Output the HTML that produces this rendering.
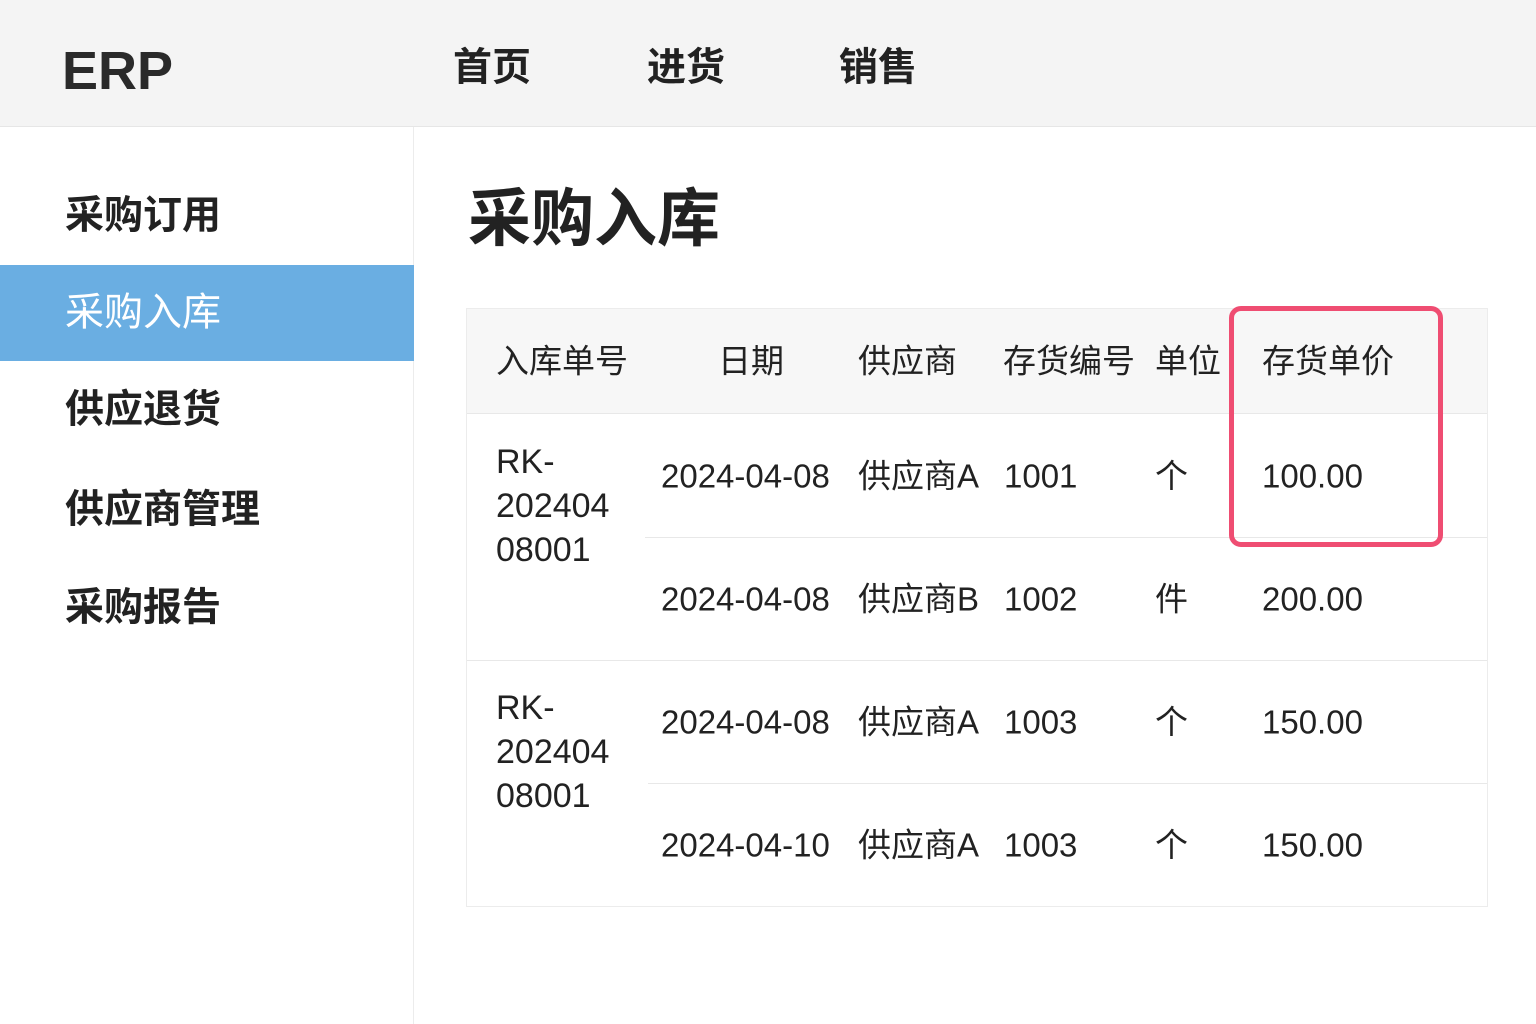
<!DOCTYPE html>
<html><head><meta charset="utf-8"><style>
body{margin:0;width:1536px;height:1024px;position:relative;overflow:hidden;background:#fff;font-family:"Liberation Sans","Noto Sans CJK SC",sans-serif;color:#222}
.a{position:absolute;white-space:nowrap;line-height:1}
.hdr{position:absolute;left:0;top:0;width:1536px;height:126px;background:#f4f4f4;border-bottom:1px solid #e6e6e6}
.side{position:absolute;left:0;top:127px;width:413px;height:897px;border-right:1px solid #ececec}
.n{font-size:39px;transform:translateY(-50%)}
.t{font-size:33px;transform:translateY(-50%)}
.line{position:absolute;height:1px;background:#e8e8e8}
</style></head><body>
<div class="hdr"></div>
<div class="a" style="left:62px;top:44px;font-size:54px;font-weight:bold;color:#2a2a2a">ERP</div>
<div class="a n" style="left:453px;top:68px;font-weight:bold">首页</div>
<div class="a n" style="left:647px;top:68px;font-weight:bold">进货</div>
<div class="a n" style="left:839px;top:68px;font-weight:bold">销售</div>
<div class="side"></div>
<div style="position:absolute;left:0;top:265px;width:414px;height:96px;background:#6aaee2"></div>
<div class="a n" style="left:65px;top:216px;font-weight:bold">采购订用</div>
<div class="a n" style="left:65px;top:313px;color:#fff">采购入库</div>
<div class="a n" style="left:65px;top:410px;font-weight:bold">供应退货</div>
<div class="a n" style="left:65px;top:510px;font-weight:bold">供应商管理</div>
<div class="a n" style="left:65px;top:608px;font-weight:bold">采购报告</div>
<div class="a" style="left:468px;top:220px;font-size:63px;font-weight:bold;transform:translateY(-50%)">采购入库</div>
<div style="position:absolute;left:466px;top:308px;width:1020px;height:597px;border:1px solid #ececec"></div>
<div style="position:absolute;left:467px;top:309px;width:1020px;height:104px;background:#f7f7f7;border-bottom:1px solid #e8e8e8"></div>
<div class="line" style="left:645px;top:537px;width:842px"></div>
<div class="line" style="left:467px;top:660px;width:1020px"></div>
<div class="line" style="left:648px;top:783px;width:839px"></div>
<div class="a t" style="left:496px;top:361px">入库单号</div>
<div class="a t" style="left:718px;top:361px">日期</div>
<div class="a t" style="left:858px;top:361px">供应商</div>
<div class="a t" style="left:1003px;top:361px">存货编号</div>
<div class="a t" style="left:1155px;top:361px">单位</div>
<div class="a t" style="left:1262px;top:361px">存货单价</div>
<div class="a" style="left:496px;top:440px;font-size:34px;line-height:44px;white-space:normal;width:130px">RK-<br>202404<br>08001</div>
<div class="a" style="left:496px;top:686px;font-size:34px;line-height:44px;white-space:normal;width:130px">RK-<br>202404<br>08001</div>
<div class="a t" style="left:661px;top:476px">2024-04-08</div><div class="a t" style="left:858px;top:476px">供应商A</div>
<div class="a t" style="left:1004px;top:476px">1001</div>
<div class="a t" style="left:1155px;top:476px">个</div>
<div class="a t" style="left:1262px;top:476px">100.00</div>
<div class="a t" style="left:661px;top:599px">2024-04-08</div><div class="a t" style="left:858px;top:599px">供应商B</div>
<div class="a t" style="left:1004px;top:599px">1002</div>
<div class="a t" style="left:1155px;top:599px">件</div>
<div class="a t" style="left:1262px;top:599px">200.00</div>
<div class="a t" style="left:661px;top:722px">2024-04-08</div><div class="a t" style="left:858px;top:722px">供应商A</div>
<div class="a t" style="left:1004px;top:722px">1003</div>
<div class="a t" style="left:1155px;top:722px">个</div>
<div class="a t" style="left:1262px;top:722px">150.00</div>
<div class="a t" style="left:661px;top:845px">2024-04-10</div><div class="a t" style="left:858px;top:845px">供应商A</div>
<div class="a t" style="left:1004px;top:845px">1003</div>
<div class="a t" style="left:1155px;top:845px">个</div>
<div class="a t" style="left:1262px;top:845px">150.00</div>
<div style="position:absolute;left:1229px;top:306px;width:204px;height:231px;border:5px solid #ef4d72;border-radius:12px"></div>
</body></html>
